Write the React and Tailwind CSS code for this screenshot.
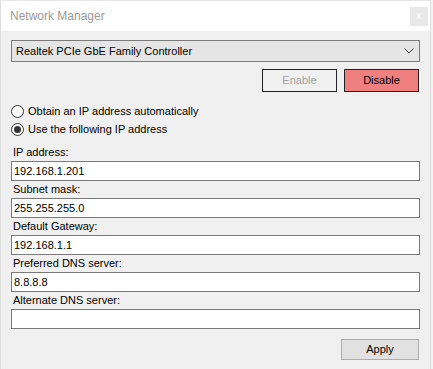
import React from 'react';

const font = { fontFamily: '"Liberation Sans", Arial, sans-serif' };

const Radio = ({ checked, label }) => (
    <div className="flex items-center h-[18px] gap-[4px]">
        <span className="w-[13px] h-[13px] rounded-full border border-[#333] bg-white flex items-center justify-center">
            {checked && <span className="w-[7px] h-[7px] rounded-full bg-[#333]" />}
        </span>
        <span className="text-[11px] text-black">{label}</span>
    </div>
);

const Field = ({ label, value }) => (
    <div className="flex flex-col">
        <div className="h-[17px] flex items-center pl-[2px] text-[11px] text-black">{label}</div>
        <div className="h-[20px] border border-[#7a7a7a] bg-white flex items-center pl-[2px] text-[11px] text-black">
            {value}
        </div>
    </div>
);

const App = () => {
    return (
        <div className="w-[433px] h-[369px] bg-[#f3f3f3] flex" style={font}>
            <div className="w-[431px] h-full flex flex-col border-l border-r border-[#dedede]">
                {/* title bar */}
                <div className="h-[31px] bg-white border-t border-[#e8e8e8] flex items-center justify-between pl-[9px] pr-[2px]">
                    <span className="text-[12px] text-[#9a9a9a]">Network Manager</span>
                    <div className="w-[18px] h-[19px] bg-[#e8e8e8] flex items-center justify-center text-[10px] text-white leading-none">x</div>
                </div>

                <div className="flex-1 bg-[#f0f0f0] px-[10px] pt-[9px] flex flex-col">
                    {/* adapter combo */}
                    <div className="h-[22px] border border-[#7a7a7a] bg-[#e5e5e5] flex items-center justify-between pl-[4px] pr-[5px]">
                        <span className="text-[11px] text-black">Realtek PCIe GbE Family Controller</span>
                        <svg width="10" height="6" viewBox="0 0 10 6" className="text-[#444]">
                            <polyline points="0.5,0.5 5,5 9.5,0.5" fill="none" stroke="currentColor" strokeWidth="1" />
                        </svg>
                    </div>

                    <div className="mt-[7px] flex justify-end gap-[7px] pr-[1px]">
                        <button className="w-[75px] h-[23px] border border-[#222] bg-[#f0f0f0] text-[11px] text-[#a3a3a3]">Enable</button>
                        <button className="w-[75px] h-[23px] border border-[#222] bg-[#f08080] text-[11px] text-black">Disable</button>
                    </div>

                    <div className="mt-[10px] flex flex-col">
                        <Radio label="Obtain an IP address automatically" />
                        <Radio checked label="Use the following IP address" />
                    </div>

                    <div className="mt-[6px] flex flex-col">
                        <Field label="IP address:" value="192.168.1.201" />
                        <Field label="Subnet mask:" value="255.255.255.0" />
                        <Field label="Default Gateway:" value="192.168.1.1" />
                        <Field label="Preferred DNS server:" value="8.8.8.8" />
                        <Field label="Alternate DNS server:" value="" />
                    </div>

                    <div className="mt-[10px] flex justify-end pr-[1px]">
                        <button className="w-[78px] h-[21px] border border-[#adadad] bg-[#e1e1e1] text-[11px] text-black">Apply</button>
                    </div>
                </div>
            </div>
        </div>
    );
};

export default App;
